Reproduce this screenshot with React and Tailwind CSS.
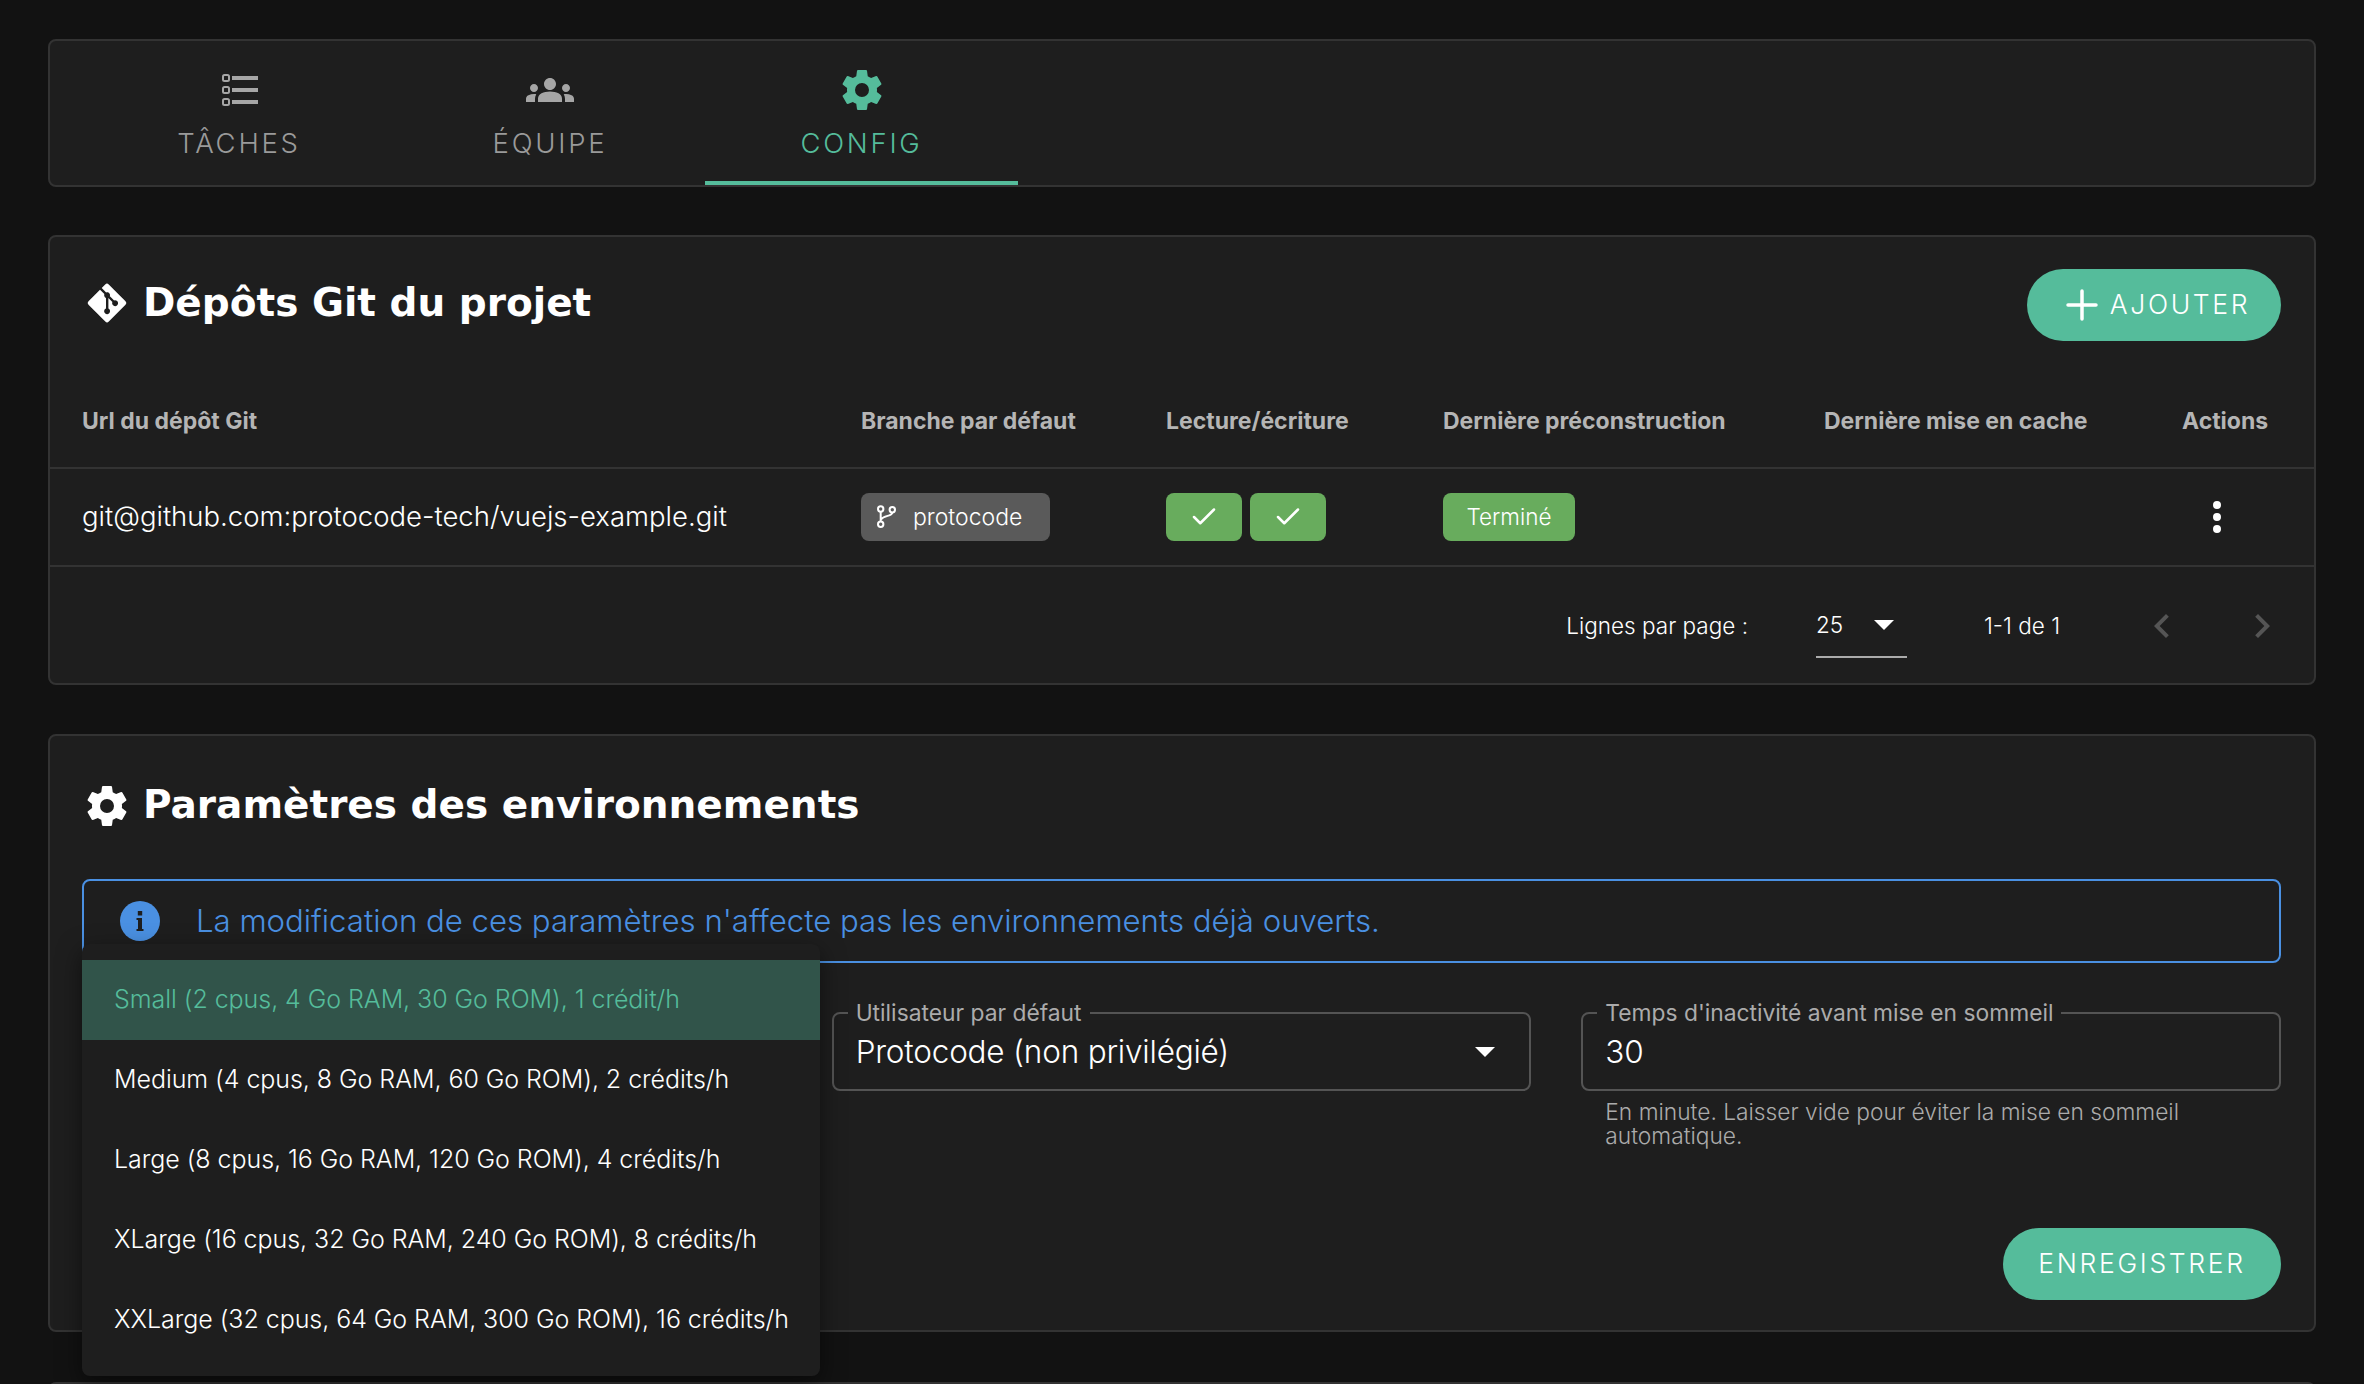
import { Check, Plus } from "lucide-react";
import { FaGitAlt } from "react-icons/fa";

const COG = "M12,15.5A3.5,3.5 0 0,1 8.5,12A3.5,3.5 0 0,1 12,8.5A3.5,3.5 0 0,1 15.5,12A3.5,3.5 0 0,1 12,15.5M19.43,12.97C19.47,12.65 19.5,12.33 19.5,12C19.5,11.67 19.47,11.34 19.43,11L21.54,9.37C21.73,9.22 21.78,8.95 21.66,8.73L19.66,5.27C19.54,5.05 19.27,4.96 19.05,5.05L16.56,6.05C16.04,5.66 15.5,5.32 14.87,5.07L14.5,2.42C14.46,2.18 14.25,2 14,2H10C9.75,2 9.54,2.18 9.5,2.42L9.13,5.07C8.5,5.32 7.96,5.66 7.44,6.05L4.95,5.05C4.73,4.96 4.46,5.05 4.34,5.27L2.34,8.73C2.21,8.95 2.27,9.22 2.46,9.37L4.57,11C4.53,11.34 4.5,11.67 4.5,12C4.5,12.33 4.53,12.65 4.57,12.97L2.46,14.63C2.27,14.78 2.21,15.05 2.34,15.27L4.34,18.73C4.46,18.95 4.73,19.03 4.95,18.95L7.44,17.94C7.96,18.34 8.5,18.68 9.13,18.93L9.5,21.58C9.54,21.82 9.75,22 10,22H14C14.25,22 14.46,21.82 14.5,21.58L14.87,18.93C15.5,18.67 16.04,18.34 16.56,17.94L19.05,18.95C19.27,19.03 19.54,18.95 19.66,18.73L21.66,15.27C21.78,15.05 21.73,14.78 21.54,14.63L19.43,12.97Z";
const GROUPS = "M12 12.75c1.63 0 3.07.39 4.24.9 1.08.48 1.76 1.56 1.76 2.73V18H6v-1.61c0-1.18.68-2.26 1.76-2.73 1.17-.52 2.61-.91 4.24-.91zM4 13c1.1 0 2-.9 2-2s-.9-2-2-2-2 .9-2 2 .9 2 2 2zm1.13 1.1c-.37-.06-.74-.1-1.13-.1-.99 0-1.93.21-2.78.58C.48 14.9 0 15.62 0 16.43V18h4.5v-1.61c0-.83.23-1.61.63-2.29zM20 13c1.1 0 2-.9 2-2s-.9-2-2-2-2 .9-2 2 .9 2 2 2zm4 3.43c0-.81-.48-1.53-1.22-1.85-.85-.37-1.79-.58-2.78-.58-.39 0-.76.04-1.13.1.4.68.63 1.46.63 2.29V18H24v-1.57zM12 6c1.66 0 3 1.34 3 3s-1.34 3-3 3-3-1.34-3-3 1.34-3 3-3z";

const ListIcon = () => (
  <svg width="48" height="48" viewBox="0 0 48 48" className="text-[#a6a6a6]">
    {[12, 24, 36].map((y) => (
      <g key={y}>
        <rect x="8" y={y - 3} width="6" height="6" rx="1.5" fill="none" stroke="currentColor" strokeWidth="2" />
        <rect x="17" y={y - 2} width="26" height="4" fill="currentColor" />
      </g>
    ))}
  </svg>
);

const GroupsIcon = () => (
  <svg width="48" height="48" viewBox="0 0 24 24" className="text-[#a6a6a6]" fill="currentColor">
    <path d={GROUPS} />
  </svg>
);

const CogIcon = ({ size, className }) => (
  <svg width={size} height={size} viewBox="0 0 24 24" className={className} fill="currentColor">
    <path d={COG} />
  </svg>
);

const BranchIcon = () => (
  <svg width="24" height="24" viewBox="0 0 24 24" fill="none" stroke="currentColor" strokeWidth="2">
    <circle cx="5.7" cy="4" r="2.7" />
    <circle cx="5.7" cy="19.3" r="2.7" />
    <circle cx="17.3" cy="4.7" r="2.7" />
    <path d="M5.7 6.7V16.6M17.3 7.4C17.3 11.5 9.5 10 5.7 14.5" />
  </svg>
);

const Triangle = () => (
  <svg width="20" height="10" viewBox="0 0 20 10" className="text-white" fill="currentColor">
    <path d="M0 0h20L10 10z" />
  </svg>
);

const Card = ({ className, children }) => (
  <section className={`rounded-lg border-2 border-[#333333] bg-[#1e1e1e] ${className}`}>{children}</section>
);

const tabs = [
  { label: "TÂCHES", icon: <ListIcon />, w: "w-[312px]" },
  { label: "ÉQUIPE", icon: <GroupsIcon />, w: "w-[310px]" },
  { label: "CONFIG", icon: <CogIcon size={48} className="text-[#55bc9b]" />, w: "w-[313px]", active: true },
];

const menuItems = [
  "Small (2 cpus, 4 Go RAM, 30 Go ROM), 1 crédit/h",
  "Medium (4 cpus, 8 Go RAM, 60 Go ROM), 2 crédits/h",
  "Large (8 cpus, 16 Go RAM, 120 Go ROM), 4 crédits/h",
  "XLarge (16 cpus, 32 Go RAM, 240 Go ROM), 8 crédits/h",
  "XXLarge (32 cpus, 64 Go RAM, 300 Go ROM), 16 crédits/h",
];

const headers = [
  { label: "Url du dépôt Git", w: "w-[779px]" },
  { label: "Branche par défaut", w: "w-[305px]" },
  { label: "Lecture/écriture", w: "w-[277px]" },
  { label: "Dernière préconstruction", w: "w-[381px]" },
  { label: "Dernière mise en cache", w: "w-[358px]" },
  { label: "Actions", w: "w-[164px]" },
];

const Field = ({ label, children }) => (
  <div className="relative flex h-[79px] items-center rounded-lg border-2 border-[#545454] px-[22px]">
    <span className="absolute -top-[15px] left-[14px] bg-[#1e1e1e] px-2 text-[22.8px] leading-[28px] text-[#ababab]">
      {label}
    </span>
    {children}
  </div>
);

const App = () => {
  return (
    <div className="h-screen overflow-hidden bg-[#121212] px-12 pt-[39px] font-['Inter',sans-serif] text-white">
      <Card className="h-[148px]">
        <div className="flex pl-[33px]">
          {tabs.map((tab) => (
            <div
              key={tab.label}
              className={`flex h-[144px] flex-col items-center border-b-4 pt-[25px] ${tab.w} ${
                tab.active ? "border-[#55bc9b] text-[#55bc9b]" : "border-transparent text-[#9a9a9a]"
              }`}
            >
              {tab.icon}
              <span className="mt-[12px] text-[27.5px] leading-[34px] font-light tracking-[0.1em]">{tab.label}</span>
            </div>
          ))}
        </div>
      </Card>

      {/* Git repositories */}
      <Card className="mt-[48px] h-[450px]">
        <div className="flex items-start justify-between pt-8 pr-[33px] pl-[35px]">
          <h2 className="flex h-[68px] items-center gap-[14px] font-['DejaVu_Sans',sans-serif] text-[39px] font-bold">
            <FaGitAlt size={44} />
            Dépôts Git du projet
          </h2>
          <button className="flex h-[72px] w-[254px] items-center justify-center gap-1 rounded-[36px] bg-[#55bc9b] text-[26.5px] font-light tracking-[0.1em]">
            <Plus size={48} strokeWidth={1.75} />
            AJOUTER
          </button>
        </div>
        <table className="mt-[32px] w-full table-fixed border-collapse">
          <thead>
            <tr className="h-[95px] border-b-2 border-[#333333]">
              {headers.map((h) => (
                <th key={h.label} className={`${h.w} pt-[2px] pl-[32px] text-left text-[23px] font-bold whitespace-nowrap text-[#b5b5b5]`}>
                  {h.label}
                </th>
              ))}
            </tr>
          </thead>
          <tbody>
            <tr className="h-[98px] border-b-2 border-[#333333]">
              <td className="pl-[32px] text-[27.5px] font-light whitespace-nowrap">git@github.com:protocode-tech/vuejs-example.git</td>
              <td className="pl-[32px]">
                <span className="inline-flex h-12 w-[189px] items-center gap-[14px] rounded-lg bg-[#5a5a5a] pl-[14px] text-[23px] font-light">
                  <BranchIcon />
                  protocode
                </span>
              </td>
              <td className="pl-[32px]">
                <div className="flex gap-2">
                  <span className="flex h-12 w-[76px] items-center justify-center rounded-lg bg-[#68ac5d]"><Check size={30} strokeWidth={2} /></span>
                  <span className="flex h-12 w-[76px] items-center justify-center rounded-lg bg-[#68ac5d]"><Check size={30} strokeWidth={2} /></span>
                </div>
              </td>
              <td className="pl-[32px]">
                <span className="inline-flex h-12 w-[132px] items-center justify-center rounded-lg bg-[#68ac5d] text-[22.5px] font-light">Terminé</span>
              </td>
              <td />
              <td>
                <svg width="48" height="48" viewBox="0 0 24 24" fill="currentColor" className="ml-[43px]">
                  <path d="M12,16A2,2 0 0,1 14,18A2,2 0 0,1 12,20A2,2 0 0,1 10,18A2,2 0 0,1 12,16M12,10A2,2 0 0,1 14,12A2,2 0 0,1 12,14A2,2 0 0,1 10,12A2,2 0 0,1 12,10M12,4A2,2 0 0,1 14,6A2,2 0 0,1 12,8A2,2 0 0,1 10,6A2,2 0 0,1 12,4Z" />
                </svg>
              </td>
            </tr>
          </tbody>
        </table>
        <div className="flex h-[117px] items-center justify-end text-[22.5px] font-light">
          <span>Lignes par page :</span>
          <div className="ml-[68px] flex h-[64px] w-[91px] items-center gap-[31px] border-b-2 border-[#ababab]">
            <span>25</span>
            <Triangle />
          </div>
          <span className="ml-[77px]">1-1 de 1</span>
          <div className="ml-[78px] flex gap-[52px] pr-[28px] text-[#555555]">
            <svg width="48" height="48" viewBox="0 0 24 24" fill="currentColor"><path d="M15.41,16.58L10.83,12L15.41,7.41L14,6L8,12L14,18L15.41,16.58Z" /></svg>
            <svg width="48" height="48" viewBox="0 0 24 24" fill="currentColor"><path d="M8.59,16.58L13.17,12L8.59,7.41L10,6L16,12L10,18L8.59,16.58Z" /></svg>
          </div>
        </div>
      </Card>

      {/* Environment settings */}
      <Card className="mt-[49px] h-[598px] pt-[30px] pr-[33px] pl-[32px]">
        <h2 className="flex h-[79px] items-center gap-[12px] pl-[2px] font-['DejaVu_Sans',sans-serif] text-[39px] font-bold">
          <CogIcon size={48} className="-ml-[1px] text-white" />
          Paramètres des environnements
        </h2>
        <div className="mt-[34px] flex h-[84px] items-center rounded-lg border-2 border-[#4a90e2] pl-[36px] text-[31.15px] font-light text-[#4a90e2]">
          <svg width="40" height="40" viewBox="0 0 40 40">
            <circle cx="20" cy="20" r="20" fill="#4a90e2" />
            <path d="M16.5 17h5.5v11h1.5v2h-7v-2H18v-9h-1.5z" fill="#1e1e1e" />
            <rect x="17.8" y="10" width="4.4" height="4.5" fill="#1e1e1e" />
          </svg>
          <span className="ml-[36px]">La modification de ces paramètres n'affecte pas les environnements déjà ouverts.</span>
        </div>
        <div className="mt-[49px] grid grid-cols-3 gap-[50px]">
          <div className="relative">
            <Field label="" />
            <ul className="absolute -top-[68px] left-0 z-10 w-[738px] rounded-lg bg-[#1e1e1e] py-4 text-[25px] font-light tracking-[-0.05px] shadow-[0_8px_24px_rgba(0,0,0,0.5)]">
              {menuItems.map((item, i) => (
                <li
                  key={item}
                  className={`flex h-[80px] items-center pl-8 whitespace-nowrap ${i === 0 ? "bg-[#31544a] text-[#55bc9b]" : ""}`}
                >
                  {item}
                </li>
              ))}
            </ul>
          </div>
          <Field label="Utilisateur par défaut">
            <span className="text-[31.5px] font-light tracking-[-0.2px]">Protocode (non privilégié)</span>
            <span className="ml-auto pr-3"><Triangle /></span>
          </Field>
          <div>
            <Field label="Temps d'inactivité avant mise en sommeil">
              <span className="text-[31.5px] font-light tracking-[-0.2px]">30</span>
            </Field>
            <p className="mt-[9px] px-6 text-[22.76px] leading-[24px] font-light text-[#ababab]">
              En minute. Laisser vide pour éviter la mise en sommeil automatique.
            </p>
          </div>
        </div>
        <div className="mt-[80px] flex justify-end">
          <button className="h-[72px] w-[278px] rounded-[36px] bg-[#55bc9b] text-[26.5px] font-light tracking-[0.1em]">ENREGISTRER</button>
        </div>
      </Card>

      <Card className="mt-[50px] h-[100px]" />
    </div>
  );
};

export default App;
